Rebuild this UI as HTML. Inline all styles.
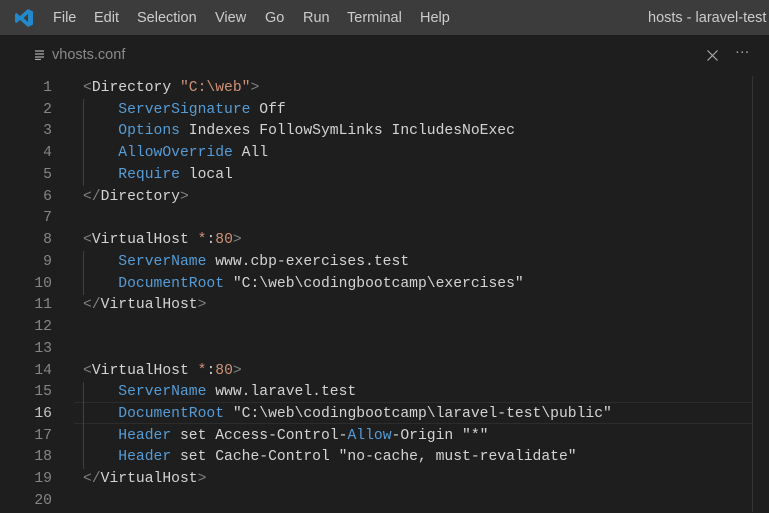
<!DOCTYPE html>
<html><head><meta charset="utf-8"><style>
html,body{margin:0;padding:0;width:769px;height:512px;overflow:hidden;background:#1e1e1e}
.title{position:absolute;left:0;top:0;width:769px;height:35px;background:#3c3c3c;font-family:"Liberation Sans",sans-serif;font-size:14.5px;color:#cccccc;overflow:hidden}
.title span{position:absolute;top:10px;white-space:nowrap}
.tab{position:absolute;top:35px;left:0;width:769px;height:40px;background:#1e1e1e;font-family:"Liberation Sans",sans-serif;font-size:14.5px;color:#8a8a8a}
.code{position:absolute;left:0;top:78px;width:769px;font-family:"Liberation Mono",monospace;font-size:14.7px;color:#d4d4d4}
.l{position:relative;height:21.74px;line-height:21.74px;white-space:pre}
.n{position:absolute;left:0;width:52px;text-align:right;color:#858585}
.t{position:absolute;left:83px}
.k{color:#569cd6}.s{color:#ce9178}.g{color:#808080}
.cur{position:absolute;left:74px;top:402px;width:678px;height:20px;border-top:1px solid #2c2c2c;border-bottom:1px solid #2c2c2c}
.guide{position:absolute;left:83px;width:1px;background:#404040}
</style></head><body>
<div class="title">
<svg style="position:absolute;left:14px;top:8px" width="20" height="20" viewBox="0 0 20 20"><path d="M14 1 L19 3.5 V16.5 L14 19 L6 12 L2.5 15 L1 14 V6 L2.5 5 L6 8 Z M14 6 L9.5 10 L14 14 Z" fill="#2489ca" fill-rule="evenodd"/></svg>
<span style="left:53px">File</span><span style="left:94px">Edit</span><span style="left:137px">Selection</span><span style="left:215px">View</span><span style="left:265px">Go</span><span style="left:303px">Run</span><span style="left:347px">Terminal</span><span style="left:420px">Help</span><span style="left:648px">hosts - laravel-test -</span>
</div>
<div class="tab">
<svg style="position:absolute;left:35px;top:15px" width="10" height="10"><path d="M0 1h9M0 4h9M0 7h9M0 9.5h6" stroke="#aaa" stroke-width="1.2"/></svg>
<span style="position:absolute;left:52px;top:12px">vhosts.conf</span>
<svg style="position:absolute;left:707px;top:15px" width="11" height="11"><path d="M0.5 0.5L10.5 10.5M10.5 0.5L0.5 10.5" stroke="#aaa" stroke-width="1.2"/></svg>
<span style="position:absolute;left:735px;top:9px;color:#aaa">···</span>
</div>
<div style="position:absolute;left:752px;top:76px;width:1px;height:436px;background:#333"></div>
<div class="cur"></div>
<div class="guide" style="top:99px;height:87px"></div>
<div class="guide" style="top:251px;height:44px"></div>
<div class="guide" style="top:382px;height:87px"></div>
<div class="code">
<div class="l"><span class="n">1</span><span class="t"><span class="g">&lt;</span>Directory <span class="s">"C:\web"</span><span class="g">&gt;</span></span></div>
<div class="l"><span class="n">2</span><span class="t">    <span class="k">ServerSignature</span> Off</span></div>
<div class="l"><span class="n">3</span><span class="t">    <span class="k">Options</span> Indexes FollowSymLinks IncludesNoExec</span></div>
<div class="l"><span class="n">4</span><span class="t">    <span class="k">AllowOverride</span> All</span></div>
<div class="l"><span class="n">5</span><span class="t">    <span class="k">Require</span> local</span></div>
<div class="l"><span class="n">6</span><span class="t"><span class="g">&lt;/</span>Directory<span class="g">&gt;</span></span></div>
<div class="l"><span class="n">7</span></div>
<div class="l"><span class="n">8</span><span class="t"><span class="g">&lt;</span>VirtualHost <span class="s">*</span>:<span class="s">80</span><span class="g">&gt;</span></span></div>
<div class="l"><span class="n">9</span><span class="t">    <span class="k">ServerName</span> www.cbp-exercises.test</span></div>
<div class="l"><span class="n">10</span><span class="t">    <span class="k">DocumentRoot</span> "C:\web\codingbootcamp\exercises"</span></div>
<div class="l"><span class="n">11</span><span class="t"><span class="g">&lt;/</span>VirtualHost<span class="g">&gt;</span></span></div>
<div class="l"><span class="n">12</span></div>
<div class="l"><span class="n">13</span></div>
<div class="l"><span class="n">14</span><span class="t"><span class="g">&lt;</span>VirtualHost <span class="s">*</span>:<span class="s">80</span><span class="g">&gt;</span></span></div>
<div class="l"><span class="n">15</span><span class="t">    <span class="k">ServerName</span> www.laravel.test</span></div>
<div class="l"><span class="n" style="color:#c6c6c6">16</span><span class="t">    <span class="k">DocumentRoot</span> "C:\web\codingbootcamp\laravel-test\public"</span></div>
<div class="l"><span class="n">17</span><span class="t">    <span class="k">Header</span> set Access-Control-<span class="k">Allow</span>-Origin "*"</span></div>
<div class="l"><span class="n">18</span><span class="t">    <span class="k">Header</span> set Cache-Control "no-cache, must-revalidate"</span></div>
<div class="l"><span class="n">19</span><span class="t"><span class="g">&lt;/</span>VirtualHost<span class="g">&gt;</span></span></div>
<div class="l"><span class="n">20</span></div>
</div>
</body></html>
